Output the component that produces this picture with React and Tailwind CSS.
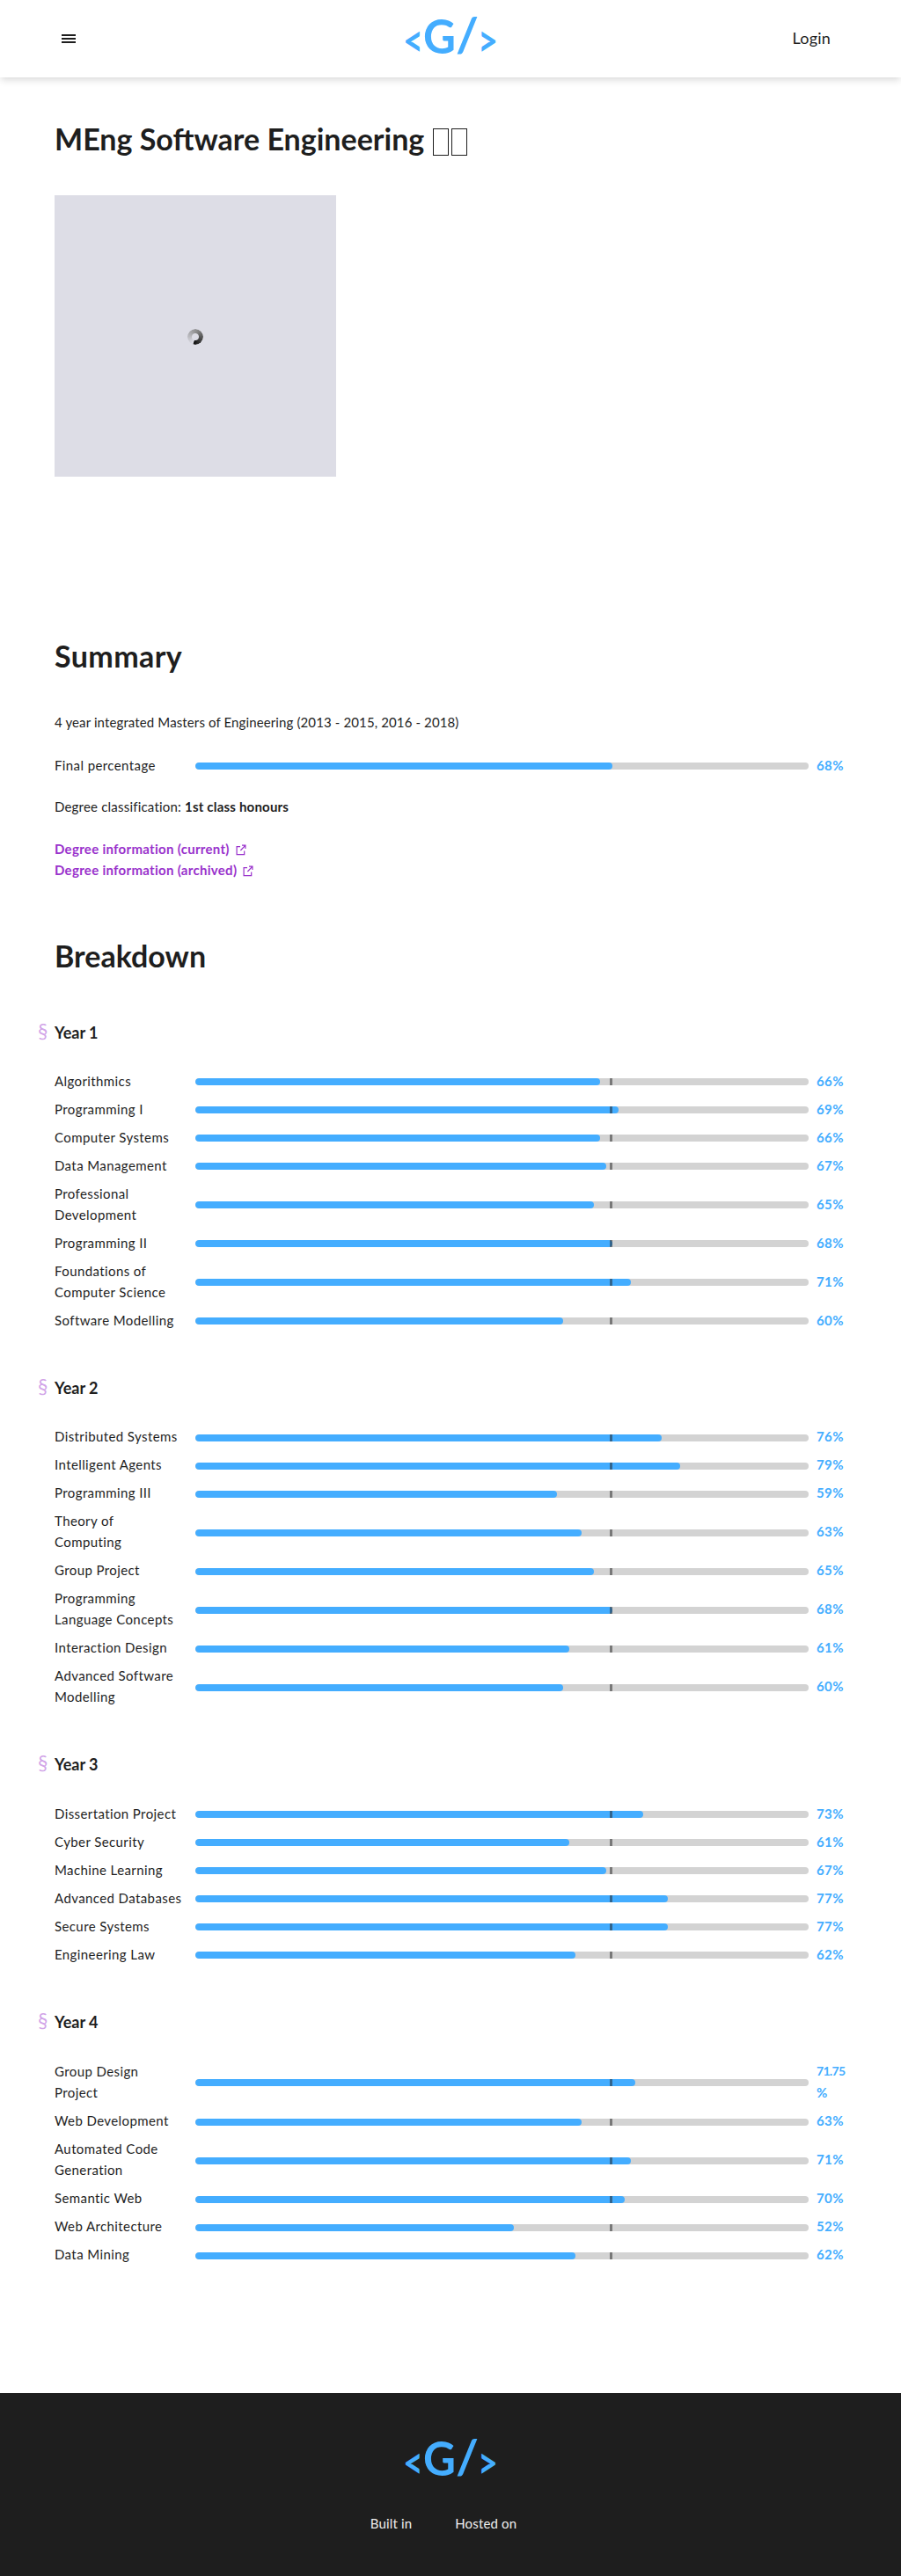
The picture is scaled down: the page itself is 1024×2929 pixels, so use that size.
const YEARS = [
  {
    title: "Year 1",
    modules: [
      ["Algorithmics", 66],
      ["Programming I", 69],
      ["Computer Systems", 66],
      ["Data Management", 67],
      ["Professional\nDevelopment", 65],
      ["Programming II", 68],
      ["Foundations of\nComputer Science", 71],
      ["Software Modelling", 60],
    ],
  },
  {
    title: "Year 2",
    modules: [
      ["Distributed Systems", 76],
      ["Intelligent Agents", 79],
      ["Programming III", 59],
      ["Theory of\nComputing", 63],
      ["Group Project", 65],
      ["Programming\nLanguage Concepts", 68],
      ["Interaction Design", 61],
      ["Advanced Software\nModelling", 60],
    ],
  },
  {
    title: "Year 3",
    modules: [
      ["Dissertation Project", 73],
      ["Cyber Security", 61],
      ["Machine Learning", 67],
      ["Advanced Databases", 77],
      ["Secure Systems", 77],
      ["Engineering Law", 62],
    ],
  },
  {
    title: "Year 4",
    modules: [
      ["Group Design\nProject", 71.75],
      ["Web Development", 63],
      ["Automated Code\nGeneration", 71],
      ["Semantic Web", 70],
      ["Web Architecture", 52],
      ["Data Mining", 62],
    ],
  },
];

function Logo() {
  return (
    <svg width="120" height="88" viewBox="-8 -20 120 88" className="-my-5 block shrink-0 fill-[#44adff]" fontFamily="Lato, sans-serif" fontWeight="700">
      <text x="-2" y="47" fontSize="49" textLength="23" lengthAdjust="spacingAndGlyphs">&lt;</text>
      <text x="21" y="43.5" fontSize="54" textLength="37" lengthAdjust="spacingAndGlyphs">G</text>
      <text x="58" y="42" fontSize="53" textLength="26" lengthAdjust="spacingAndGlyphs">/</text>
      <text x="83" y="47" fontSize="49" textLength="23" lengthAdjust="spacingAndGlyphs">&gt;</text>
    </svg>
  );
}

function ExternalIcon() {
  return (
    <svg width="12" height="13" viewBox="0 0 12 13" fill="none" stroke="currentColor" strokeWidth="1.2" className="mt-[7px] ml-[7px]">
      <path d="M5 2.6H1.1v9h8.6V7.5" />
      <path d="M7 1.1h3.9V5M10.7 1.3 5.4 7" />
    </svg>
  );
}

function Bar({ label, value, marker }) {
  return (
    <div className="grid grid-cols-[160px_697px_34px] items-center">
      <div className="-mt-[1.5px] mb-[1.5px] tracking-[0.4px] whitespace-pre">{label}</div>
      <div className="relative h-2 overflow-hidden rounded bg-[#d3d3d3]">
        <div className="h-full rounded bg-[#44adff]" style={{ width: `${value}%` }} />
        {marker && <div className="absolute top-0 left-[471px] h-full w-[3px] bg-[#1e1e1e]/50" />}
      </div>
      <div className="-mt-[1.5px] mb-[1.5px] pl-[9px] font-bold text-[#44adff]">
        {Number.isInteger(value) ? (
          <span className="tracking-[0.4px]">{`${value}%`}</span>
        ) : (
          <>
            <span className="text-[14px] tracking-[-0.7px]">{value}</span>
            <br />%
          </>
        )}
      </div>
    </div>
  );
}

function Spinner() {
  return (
    <div className="mt-px size-[18px] rounded-full bg-[conic-gradient(from_200deg,#dddde6,#888_50%,#111_98%,#dddde6)] [mask:radial-gradient(circle,transparent_3.5px,#000_4.5px)]" />
  );
}

export default function App() {
  return (
    <div className="flex h-[2929px] w-full flex-col bg-white font-[Lato,sans-serif] text-[15px] leading-6 text-[#1e1e1e]">
      <header className="grid h-[88px] shrink-0 grid-cols-3 items-center px-[70px] shadow-[0_4px_8px_-1px_rgba(0,0,0,0.15)]">
        <div className="flex w-4 flex-col gap-0.5">
          <span className="h-0.5 bg-[#1e1e1e]" />
          <span className="h-0.5 bg-[#1e1e1e]" />
          <span className="h-0.5 bg-[#1e1e1e]" />
        </div>
        <div className="-mt-[6px] flex justify-center">
          <Logo />
        </div>
        <div className="-mt-0.5 pr-[10px] text-right text-[18px] tracking-[0.2px]">Login</div>
      </header>

      <main className="flex grow flex-col px-[62px] pt-[46px]">
        <h1 className="flex items-center text-[34px] leading-[48px] font-bold">
          MEng Software Engineering
          <span className="mt-[7px] ml-[10px] flex gap-[3px]">
            <span className="h-[31px] w-[18px] border border-[#1e1e1e]" />
            <span className="h-[31px] w-[18px] border border-[#1e1e1e]" />
          </span>
        </h1>
        <div className="mt-10 flex size-80 items-center justify-center bg-[#dddde6]">
          <Spinner />
        </div>

        <h2 className="mt-[180px] text-[34px] leading-[48px] font-bold tracking-[0.4px]">Summary</h2>
        <p className="mt-[39px] tracking-[0.12px]">4 year integrated Masters of Engineering (2013 - 2015, 2016 - 2018)</p>
        <div className="mt-[26px]">
          <Bar label="Final percentage" value={68} />
        </div>
        <p className="mt-[22px] tracking-[0.2px]">
          Degree classification: <b>1st class honours</b>
        </p>
        <div className="mt-6 font-bold tracking-[0.3px] text-[#9932cc]">
          <a className="flex h-6">Degree information (current)<ExternalIcon /></a>
          <a className="flex h-6">Degree information (archived)<ExternalIcon /></a>
        </div>

        <h2 className="mt-[62px] -mb-px text-[34px] leading-[48px] font-bold">Breakdown</h2>
        {YEARS.map((year) => (
          <section key={year.title} className="mt-[47.6px]">
            <h3 className="-ml-[19px] flex text-[18px] leading-8 font-bold">
              <span className="-mt-0.5 w-[19px] text-[23px] font-normal text-[#9932cc]/45">§</span>
              {year.title}
            </h3>
            <div className="mt-[28.8px] flex flex-col gap-2">
              {year.modules.map(([label, value]) => (
                <Bar key={label} label={label} value={value} marker />
              ))}
            </div>
          </section>
        ))}
      </main>

      <footer className="flex h-[208px] shrink-0 flex-col items-center bg-[#1e1e1e] pt-[50px] text-[#eeeeee]">
        <Logo />
        <div className="mt-[38px] flex gap-[49px] pr-[16px] tracking-[0.15px]">
          <span>Built in</span>
          <span>Hosted on</span>
        </div>
      </footer>
    </div>
  );
}
